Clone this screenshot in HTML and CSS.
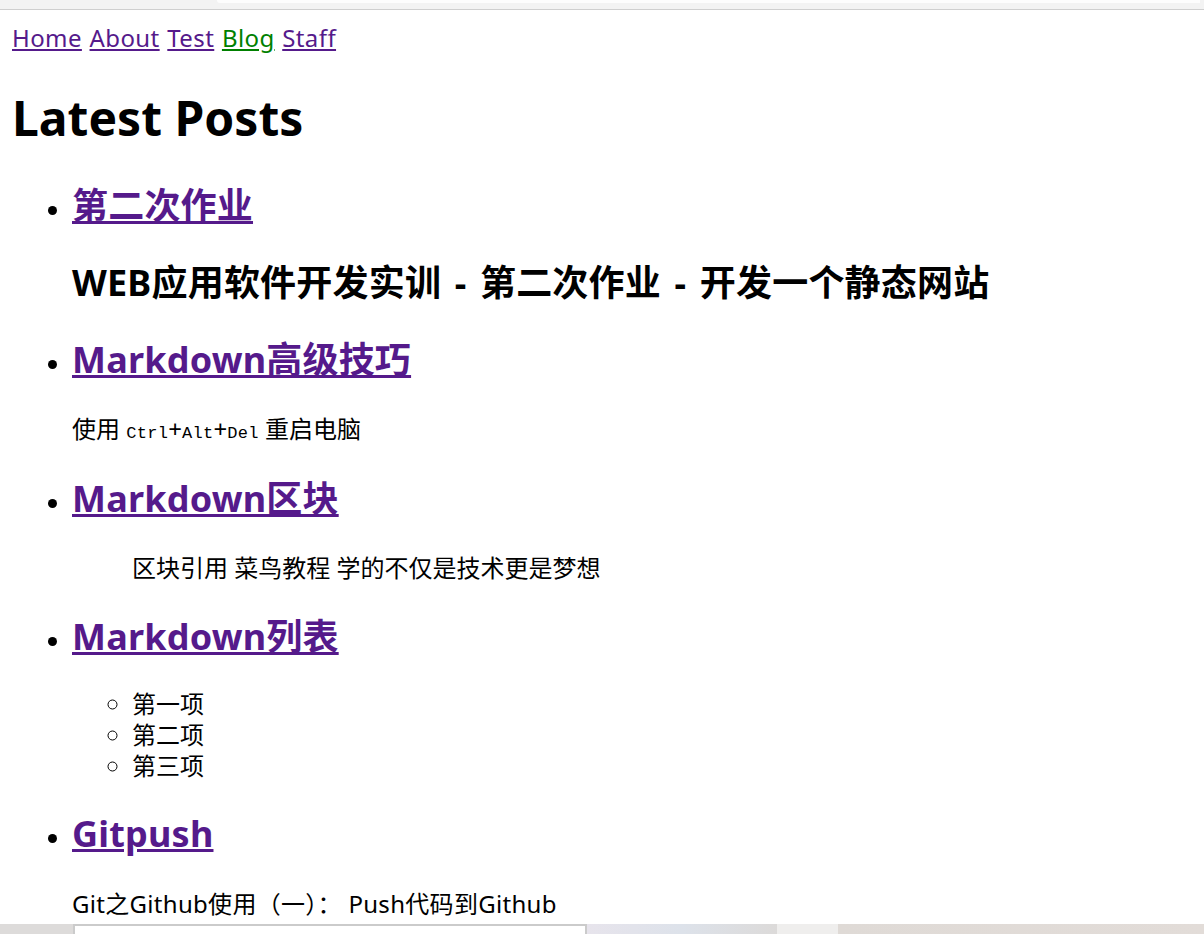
FILE: index.html
```html
<!DOCTYPE html>
<html lang="zh-CN">
<head>
<meta charset="utf-8">
<title>Latest Posts</title>
<link rel="stylesheet" href="styles.css">
</head>
<body>
<div class="chrome-top"><div class="chrome-tab"></div></div>
<div class="page">
  <nav class="nav">
    <a href="#" class="visited">Home</a>
    <a href="#" class="visited">About</a>
    <a href="#" class="visited">Test</a>
    <a href="#" class="active">Blog</a>
    <a href="#" class="visited">Staff</a>
  </nav>
  <h1 class="title">Latest Posts</h1>
  <ul class="posts">
    <li>
      <h2><a href="#" class="visited">第二次作业</a></h2>
      <h2 class="excerpt-h">WEB应用软件开发实训 - 第二次作业 - 开发一个静态网站</h2>
    </li>
    <li>
      <h2><a href="#" class="visited">Markdown高级技巧</a></h2>
      <p>使用 <kbd>Ctrl</kbd>+<kbd>Alt</kbd>+<kbd>Del</kbd> 重启电脑</p>
    </li>
    <li>
      <h2><a href="#" class="visited">Markdown区块</a></h2>
      <blockquote><p>区块引用 菜鸟教程 学的不仅是技术更是梦想</p></blockquote>
    </li>
    <li>
      <h2><a href="#" class="visited">Markdown列表</a></h2>
      <ul class="sub">
        <li>第一项</li>
        <li>第二项</li>
        <li>第三项</li>
      </ul>
    </li>
    <li>
      <h2><a href="#" class="visited">Gitpush</a></h2>
      <p class="latin">Git之Github使用（一）： Push代码到Github</p>
    </li>
  </ul>
</div>
<div class="taskbar">
  <div class="tb-left"></div>
  <div class="tb-box"></div>
  <div class="tb-img1"></div>
  <div class="tb-img2"></div>
  <div class="tb-img3"></div>
</div>
</body>
</html>
```
FILE: styles.css
```css
html, body {
  margin: 0;
  padding: 0;
  background: #fff;
}
body {
  font-family: "Noto Sans", "Noto Sans CJK SC", sans-serif;
  font-size: 24px;
  line-height: 1.3;
  color: #000;
}
.chrome-top {
  height: 9px;
  background: #f3f3f3;
  border-bottom: 1px solid #cfcfcf;
  display: flex;
  padding-left: 217px;
  padding-right: 4px;
}
.chrome-tab {
  flex: 1;
  height: 3px;
  background: #fdfdfd;
  border-bottom-left-radius: 4px;
}
.page {
  padding: 12px;
}
.nav {
  letter-spacing: 0.4px;
  word-spacing: 1px;
  line-height: 1.32;
}
.nav a {
  text-decoration: underline;
}
a.visited { color: #551a8b; }
a.active { color: #008000; }
.title {
  font-size: 48px;
  font-weight: bold;
  margin: 32px 0 34px;
  line-height: 1.32;
}
.posts {
  margin: 24px 0;
  padding-left: 60px;
  list-style: disc;
}
.posts h2 {
  font-size: 36px;
  font-weight: bold;
  margin: 30px 0;
  letter-spacing: 0.2px;
}
.posts h2.excerpt-h {
  word-spacing: 4px;
}
.posts p {
  margin: 24px 0;
}
.posts p.latin {
  letter-spacing: 0.3px;
}
kbd {
  font-family: "Liberation Mono", monospace;
  font-size: 17px;
  letter-spacing: 0.3px;
}
blockquote {
  margin: 24px 60px;
}
.sub {
  list-style: circle;
  padding-left: 60px;
  margin: -2px 0 1px;
  line-height: 31px;
}
.taskbar {
  position: fixed;
  left: 0;
  right: 0;
  bottom: 0;
  height: 10px;
  display: flex;
}
.tb-left {
  width: 73px;
  background: #dddbda;
}
.tb-box {
  width: 510px;
  background: #fff;
  border: 2px solid #cbcbcb;
  border-bottom: none;
}
.tb-img1 {
  width: 190px;
  background: linear-gradient(90deg, #e7e4ec, #dde2ea 50%, #dcdad9);
}
.tb-img2 {
  width: 61px;
  background: #efeeed;
}
.tb-img3 {
  flex: 1;
  background: linear-gradient(90deg, #dfdad6, #e2dcd8);
}
```
